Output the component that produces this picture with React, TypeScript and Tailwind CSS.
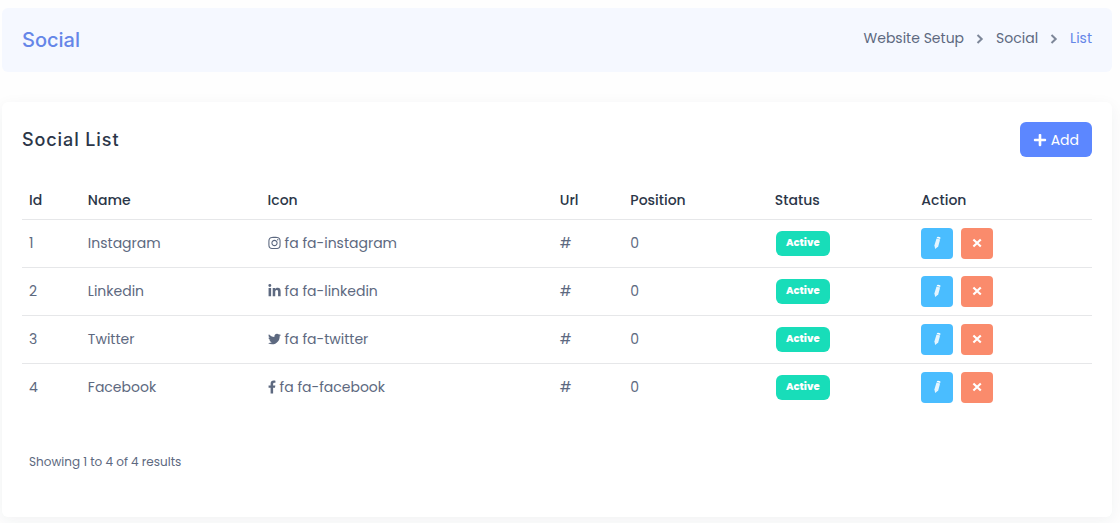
import React from 'react';
import { FaFacebookF, FaInstagram, FaLinkedinIn, FaPlus, FaTwitter } from 'react-icons/fa';

interface SocialLink {
  id: number;
  name: string;
  icon: string;
  glyph: React.ReactNode;
  url: string;
  position: number;
}

const links: SocialLink[] = [
  { id: 1, name: 'Instagram', icon: 'fa fa-instagram', glyph: <FaInstagram className="h-3.5 w-[13px]" />, url: '#', position: 0 },
  { id: 2, name: 'Linkedin', icon: 'fa fa-linkedin', glyph: <FaLinkedinIn className="h-3.5 w-[13px]" />, url: '#', position: 0 },
  { id: 3, name: 'Twitter', icon: 'fa fa-twitter', glyph: <FaTwitter className="h-3.5 w-[13px]" />, url: '#', position: 0 },
  { id: 4, name: 'Facebook', icon: 'fa fa-facebook', glyph: <FaFacebookF className="h-3.5 w-2" />, url: '#', position: 0 },
];

const columns = [
  { label: 'Id', width: 'w-[5.5%]' },
  { label: 'Name', width: 'w-[16.8%]' },
  { label: 'Icon', width: 'w-[27.3%]' },
  { label: 'Url', width: 'w-[6.6%]' },
  { label: 'Position', width: 'w-[13.5%]' },
  { label: 'Status', width: 'w-[13.7%]' },
  { label: 'Action', width: 'w-[16.6%]' },
];

const ChevronIcon = () => (
  <svg viewBox="0 0 8 12" className="mt-0.5 h-3 w-2 text-[#7d8799]" fill="none" stroke="currentColor" strokeWidth="2" aria-hidden="true">
    <path d="M1.5 2 5.7 6 1.5 10" />
  </svg>
);

const PencilIcon = () => (
  <svg viewBox="0 0 10 14" className="h-3.5 w-2.5" fill="currentColor" aria-hidden="true">
    <path d="M5.1 1.2Q5.4.6 6.1.8L8 1.3Q8.6 1.5 8.4 2.1L8.2 2.9 4.7 2Z" />
    <path d="M4.5 2.6 8.1 3.5 6.2 10.4 3.2 12.9 2.4 9.6Z" opacity=".85" />
  </svg>
);

const CloseIcon = () => (
  <svg viewBox="0 0 10 10" className="size-2.5" stroke="currentColor" strokeWidth="2.1" aria-hidden="true">
    <path d="M1.4 1.4 8.8 8.6M8.8 1.4 1.4 8.6" />
  </svg>
);

const PageHeader: React.FC = () => (
  <header className="flex h-16 items-center justify-between rounded-md bg-[#f5f8ff] px-5">
    <h1 className="font-['Inter',sans-serif] text-xl font-medium text-[#6586e8]">Social</h1>
    <nav aria-label="Breadcrumb" className="pb-1">
      <ol className="flex items-center gap-3 text-sm text-[#5d6980]">
        <li><a href="#setup">Website Setup</a></li>
        <li><ChevronIcon /></li>
        <li><a href="#social">Social</a></li>
        <li><ChevronIcon /></li>
        <li className="text-[#6586e8]" aria-current="page">List</li>
      </ol>
    </nav>
  </header>
);

const SocialTable: React.FC = () => (
  <table className="w-full table-fixed text-left text-sm text-[#5d6980]">
    <thead>
      <tr className="h-[38px] border-b border-[#e6e7e9] text-[#2b3648]">
        {columns.map((column) => (
          <th key={column.label} scope="col" className={`px-[7px] font-medium ${column.width}`}>
            {column.label}
          </th>
        ))}
      </tr>
    </thead>
    <tbody>
      {links.map((link) => (
        <tr key={link.id} className="h-12 border-b border-[#e6e7e9] last:border-b-0">
          <td className="px-[7px]">{link.id}</td>
          <td className="px-[7px]">{link.name}</td>
          <td className="px-[7px]">
            <span className="flex items-center gap-1">
              {link.glyph}
              {link.icon}
            </span>
          </td>
          <td className="px-[7px]">{link.url}</td>
          <td className="px-[7px]">{link.position}</td>
          <td className="px-2">
            <span className="flex h-[25px] w-[54px] items-center justify-center rounded-md bg-[#18ddb9] text-[10px] font-extrabold text-white">
              Active
            </span>
          </td>
          <td className="px-[7px]">
            <div className="flex gap-2">
              <button type="button" aria-label={`Edit ${link.name}`} className="flex h-[31px] w-8 items-center justify-center rounded bg-[#4abdff] text-white">
                <PencilIcon />
              </button>
              <button type="button" aria-label={`Delete ${link.name}`} className="flex h-[31px] w-8 items-center justify-center rounded bg-[#fa8b6c] text-white">
                <CloseIcon />
              </button>
            </div>
          </td>
        </tr>
      ))}
    </tbody>
  </table>
);

const App: React.FC = () => {
  return (
    <div className="min-h-screen bg-[#fefefe] py-2 pr-2 pl-0.5 font-['Poppins','Inter',sans-serif]">
      <PageHeader />
      <main className="mt-[30px] rounded-md bg-white px-5 pt-5 pb-[45px] shadow-[0_4px_16px_rgba(40,50,70,0.06)]">
        <div className="mb-6 flex items-center justify-between">
          <h2 className="font-['Inter',sans-serif] text-lg font-medium tracking-wider text-[#2b3648]">Social List</h2>
          <button type="button" className="flex h-[35px] items-center gap-1 rounded-md bg-[#5c87ff] px-[13px] text-sm text-white">
            <FaPlus className="size-3.5" />
            Add
          </button>
        </div>
        <SocialTable />
        <p className="mt-[41px] px-[7px] text-xs leading-5 text-[#5d6980]">Showing 1 to 4 of 4 results</p>
      </main>
    </div>
  );
};

export default App;
